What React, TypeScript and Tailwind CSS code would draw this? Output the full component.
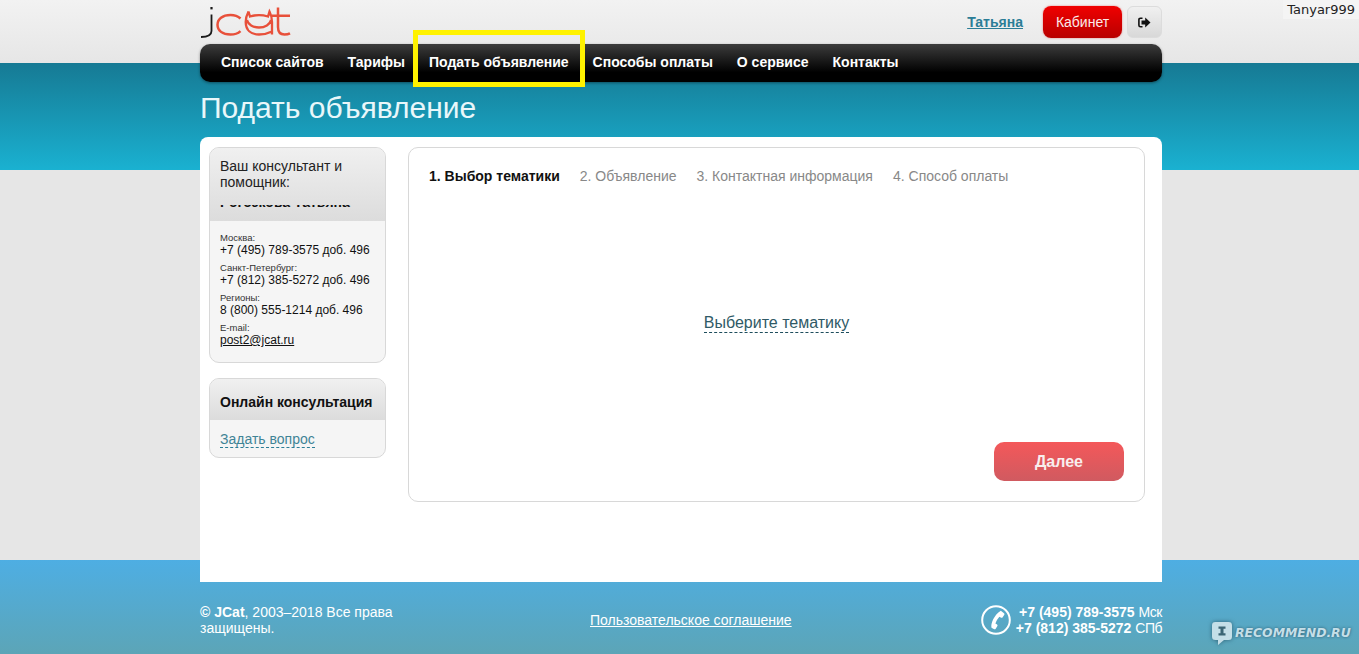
import React from "react";

const nav = ["Список сайтов", "Тарифы", "Подать объявление", "Способы оплаты", "О сервисе", "Контакты"];

function Logo() {
  return (
    <svg width="92" height="36" viewBox="0 0 92 36" className="block">
      <path d="M11.500 9.500V26c0 4-2.500 6-10.500 6" fill="none" stroke="#1a1a1a" strokeWidth="1.800" />
      <rect x="10.400" y="2" width="2.200" height="2.400" fill="#1a1a1a" />
      <path d="M40.500 13.500c-2.500-2.300-6-3.500-10-3.500-8 0-13 4-13 9.800s5 9.800 13 9.800c4 0 7.500-1.200 10-3.500" fill="none" stroke="#e8503a" strokeWidth="2.500" />
      <path d="M48.500 6.500l1.500 5c5-1.600 13-1.600 18 0l1.500-5c1.800 3.500 2.500 6.500 2.500 10.500v12.500M48.500 6.500c-1.800 3.500-2.800 6.500-2.800 10.500 0 8 5 12.500 13.300 12.500 4 0 9-1 13-3M47 15c1 4.500 6 7.500 12 7.500s11-3 12-7.500" fill="none" stroke="#e8503a" strokeWidth="2.300" />
      <path d="M78 2.500V22c0 5 2 7.500 6.500 7.500 2 0 4-.4 5.500-1.200M72 10.800h18" fill="none" stroke="#e8503a" strokeWidth="2.500" />
    </svg>
  );
}

function Phone() {
  return (
    <svg width="30" height="30" viewBox="0 0 30 30" className="block">
      <circle cx="15" cy="15" r="13.800" fill="none" stroke="#fff" strokeWidth="2" />
      <path d="M19.800 5.800l3.200 2.400c.6.500.7 1 .3 1.600l-1.800 2.600c-.4.500-.9.600-1.400.3l-1.700-1c-1.500 1.700-3.200 4.200-4 6.800l1.700 1.100c.5.400.6.900.3 1.400l-1.700 2.800c-.4.500-.9.700-1.500.4l-2.700-1.500c-1-3.800 2.500-12.800 9.300-16.900z" fill="#fff" />
    </svg>
  );
}

function Logout() {
  return (
    <svg width="13" height="11" viewBox="0 0 13 11" className="block">
      <path d="M4.500 1.200H2.500C1.400 1.200.9 1.800.9 2.800v5.400c0 1 .5 1.600 1.600 1.600h2" fill="none" stroke="#111" strokeWidth="1.600" />
      <path d="M3.500 3.500h3.700V.6l5.300 4.900-5.300 4.900V7.500H3.500z" fill="#111" />
    </svg>
  );
}

function Bubble() {
  return (
    <svg width="20" height="23" viewBox="0 0 20 23" className="block drop-shadow-[0_0_2px_rgba(30,70,90,0.7)]">
      <path d="M3.500 0h13C19 0 20 1 20 3.500v11c0 2.500-1 3.500-3.500 3.500H12l-6 5v-5H3.500C1 18 0 17 0 14.500v-11C0 1 1 0 3.500 0z" fill="#c5dfe8" />
      <path d="M6.500 4.500h7v2.200h-2v4.600h2v2.200h-7v-2.200h2V6.700h-2z" fill="#3c6675" />
    </svg>
  );
}

function Contact({ city, phone }: { city: string; phone: string }) {
  return (
    <div className="mb-[6px]">
      <div className="text-[9.5px] leading-[10px] text-[#333]">{city}</div>
      <div className="text-[12px] leading-[14px] text-[#111]">{phone}</div>
    </div>
  );
}

export default function App() {
  return (
    <div className="relative h-[654px] w-full overflow-hidden font-['Liberation_Sans',Arial,sans-serif] bg-[linear-gradient(to_bottom,#f2f2f2_0,#e6e6e6_63px,#167a94_63px,#1ab1d1_170px,#e6e6e6_170px,#e6e6e6_560px,#4eaee3_560px,#5ca5b7_654px)]">
      <div className="ml-[200px] flex h-[654px] w-[962px] flex-col">
        <header className="flex h-[44px] items-start justify-between">
          <div className="pt-[5px]"><Logo /></div>
          <div className="flex items-center pt-[6px]">
            <a className="mr-[20px] text-[14px] font-bold text-[#2b7d96] underline">Татьяна</a>
            <button className="flex h-[32px] w-[79px] items-center justify-center rounded-[8px] bg-[linear-gradient(to_bottom,#f00000,#b80000)] text-[14px] text-[#fbeaea] shadow-[0_0_2px_rgba(220,0,0,0.5)]">Кабинет</button>
            <button className="ml-[5px] flex h-[32px] w-[35px] items-center justify-center rounded-[6px] border border-[#dcdcdc] bg-[linear-gradient(to_bottom,#f0f0f0,#d8d8d8)]"><Logout /></button>
          </div>
        </header>

        <nav className="flex h-[38px] items-center rounded-[10px] bg-[linear-gradient(to_bottom,#3c3c3c,#000_75%)] pb-[2px] pl-[21px] shadow-[0_1px_3px_rgba(0,0,0,0.4)]">
          {nav.map((item, i) => (
            <a key={item} className={`relative text-[14px] font-bold text-white ${i === nav.length - 1 ? "" : "mr-[24px]"}`}>
              {item}
              {i === 2 && <span className="absolute left-[-16px] top-[-22px] h-[57px] w-[172px] border-[5px] border-[#fff200]" />}
            </a>
          ))}
        </nav>

        <h1 className="mt-[8px] h-[47px] text-[30px] leading-[36px] text-[#e9f7fa]">Подать объявление</h1>

        <main className="flex h-[445px] rounded-t-[8px] bg-white pl-[9px] pt-[10px]">
          <aside className="w-[177px]">
            <section className="h-[216px] overflow-hidden rounded-[10px] border border-[#d8d8d8] bg-[#f5f5f5]">
              <div className="h-[73px] overflow-hidden bg-[linear-gradient(to_bottom,#f0f0f0,#dcdcdc)] px-[10px] pt-[10px] text-[14px] leading-[16px] text-[#222]">
                Ваш консультант и<br />помощник:
                <div className="mt-[15px] h-[3px] overflow-hidden">
                  <div className="-mt-[11px] text-[14px] font-bold leading-[16px] text-[#111]">Рогозкова Татьяна</div>
                </div>
              </div>
              <div className="px-[10px] pt-[12px]">
                <Contact city="Москва:" phone="+7 (495) 789-3575 доб. 496" />
                <Contact city="Санкт-Петербург:" phone="+7 (812) 385-5272 доб. 496" />
                <Contact city="Регионы:" phone="8 (800) 555-1214 доб. 496" />
                <div className="text-[9.5px] leading-[10px] text-[#333]">E-mail:</div>
                <a className="block text-[12px] leading-[14px] text-[#111] underline">post2@jcat.ru</a>
              </div>
            </section>
            <section className="mt-[15px] h-[80px] overflow-hidden rounded-[10px] border border-[#d8d8d8] bg-[#f5f5f5]">
              <div className="flex h-[41px] items-center bg-[linear-gradient(to_bottom,#f0f0f0,#dcdcdc)] px-[10px] pt-[6px] text-[14px] font-bold text-[#111]">Онлайн консультация</div>
              <div className="px-[10px] pt-[7px]">
                <a className="inline-block border-b border-dashed border-[#2b7d96] text-[14px] leading-[16px] text-[#3f8496]">Задать вопрос</a>
              </div>
            </section>
          </aside>

          <section className="ml-[22px] flex h-[355px] w-[737px] flex-col rounded-[10px] border border-[#d8d8d8] px-[20px] pt-[20px]">
            <div className="flex gap-[20px] text-[14px] leading-[16px] text-[#888]">
              <span className="font-bold text-[#111]">1. Выбор тематики</span>
              <span>2. Объявление</span>
              <span>3. Контактная информация</span>
              <span>4. Способ оплаты</span>
            </div>
            <div className="mt-[130px] flex justify-center">
              <a className="border-b border-dashed border-[#1d4d5c] text-[16px] leading-[18px] text-[#2f5a66]">Выберите тематику</a>
            </div>
            <div className="mt-[109px] flex justify-end">
              <button className="h-[39px] w-[130px] rounded-[10px] bg-[linear-gradient(to_bottom,#f4585a,#d05a60)] text-[16px] font-bold text-[#f8eeee]">Далее</button>
            </div>
          </section>
        </main>

        <footer className="flex h-[72px] items-start text-[14px] leading-[16px] text-white">
          <div className="mt-[22px] w-[220px]"><b>© JCat</b>, 2003–2018 Все права защищены.</div>
          <a className="ml-[170px] mt-[30px] underline">Пользовательское соглашение</a>
          <div className="ml-auto mt-[22px] flex items-center gap-[5px]">
            <Phone />
            <div className="text-right">
              <div><b>+7 (495) 789-3575</b> <span className="tracking-[-0.5px]">Мск</span></div>
              <div><b>+7 (812) 385-5272</b> <span className="tracking-[-0.5px]">СПб</span></div>
            </div>
          </div>
        </footer>
      </div>

      <div className="absolute right-0 top-0 bg-[#f4f4f4] pl-[4px] pr-[4px] font-['DejaVu_Sans',sans-serif] text-[13px] leading-[19px] text-[#222]">Tanyar999</div>
      <div className="absolute left-[1212px] top-[622px] flex items-center gap-[3px]">
        <Bubble />
        <span className="font-['DejaVu_Sans',sans-serif] text-[12.4px] font-bold italic text-[#c5dfe8] [text-shadow:0_0_3px_rgba(30,70,90,0.8)]">RECOMMEND.RU</span>
      </div>
    </div>
  );
}
